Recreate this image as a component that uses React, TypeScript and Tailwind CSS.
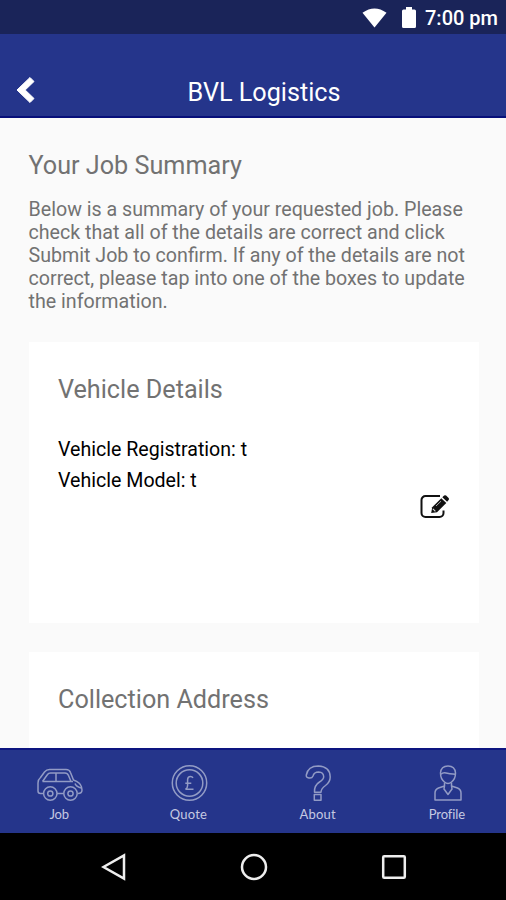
import type { ReactNode } from "react";

const TABS = [
    { label: "Job", icon: <CarIcon />, text: "tracking-[-0.3px]" },
    { label: "Quote", icon: <PoundIcon />, text: "tracking-[0.2px]" },
    { label: "About", icon: <QuestionIcon />, text: "tracking-[0.2px]" },
    { label: "Profile", icon: <PersonIcon />, text: "tracking-[-0.1px]" },
];

export default function App() {
    return (
        <div className="flex h-[900px] w-[506px] flex-col overflow-hidden bg-[#fafafa] font-['Roboto',sans-serif]">
            <StatusBar />
            <Header title="BVL Logistics" />

            <main className="flex min-h-0 flex-1 flex-col overflow-hidden px-[28.5px] text-[#727272]">
                <h1 className="mt-[32px] text-[25.2px] leading-[32px] whitespace-nowrap">Your Job Summary</h1>
                <p className="mt-[17px] text-[19.65px] leading-[22.9px] whitespace-nowrap">
                    Below is a summary of your requested job. Please
                    <br />
                    check that all of the details are correct and click
                    <br />
                    Submit Job to confirm. If any of the details are not
                    <br />
                    correct, please tap into one of the boxes to update
                    <br />
                    the information.
                </p>

                <Card title="Vehicle Details" className="mt-[28px] h-[281px]">
                    <div className="mt-[28px] text-[19.6px] leading-[31.5px] text-black">
                        <p>Vehicle Registration: t</p>
                        <p>Vehicle Model: t</p>
                    </div>
                    <button className="mt-[-3px] mr-[-1px] self-end" aria-label="Edit vehicle details">
                        <EditIcon />
                    </button>
                </Card>

                <Card title="Collection Address" className="mt-[29px] h-[281px]" />
            </main>

            <nav className="h-[85px] shrink-0 border-t-2 border-[#0d1580] bg-[#25358b]">
                <div className="mx-[-5.5px] grid grid-cols-4">
                    {TABS.map((tab) => (
                        <button key={tab.label} className="flex flex-col items-center pt-[15px] text-[#c5c9e2]">
                            {tab.icon}
                            <span
                                className={`mt-[4px] font-['Lato',sans-serif] text-[13px] leading-[18px] ${tab.text}`}
                            >
                                {tab.label}
                            </span>
                        </button>
                    ))}
                </div>
            </nav>

            <SystemNav />
        </div>
    );
}

function StatusBar() {
    return (
        <div className="flex h-[34px] shrink-0 items-center justify-end bg-[#1a2459] pt-px pr-[8px] text-white">
            <svg className="h-[20px] w-[25px]" viewBox="0 0 26 20" fill="currentColor">
                <path d="M.5 4.5Q13-4.5 25.500 4.500L13 20Z" />
            </svg>
            <svg className="ml-[15px] h-[21px] w-[14px]" viewBox="0 0 14 21" fill="currentColor">
                <path d="M4 0h6v2.500h2.500a1.500 1.500 0 0 1 1.500 1.500v15.500a1.500 1.500 0 0 1-1.500 1.500h-11A1.500 1.500 0 0 1 0 19.500V4a1.500 1.500 0 0 1 1.500-1.500H4Z" />
            </svg>
            <span className="ml-[9px] pt-px text-[20px] leading-[32px] font-medium whitespace-nowrap">7:00 pm</span>
        </div>
    );
}

function Header({ title }: Readonly<{ title: string }>) {
    return (
        <header className="grid h-[84px] shrink-0 grid-cols-[60px_1fr_38px] items-center border-b-2 border-[#07107a] bg-[#25358b] pt-[31px] text-white">
            <button className="ml-[16px] pb-[2px]" aria-label="Back">
                <svg className="h-[26px] w-[19px]" viewBox="0 0 19 26" fill="currentColor">
                    <path d="M14 .5 18 4.500 9.200 13 18 21.500 14 25.500 1 13Z" stroke="currentColor" strokeLinejoin="round" />
                </svg>
            </button>
            <h2 className="pt-[5px] text-center text-[25.2px] leading-[32px]">{title}</h2>
        </header>
    );
}

function Card({
    title,
    className,
    children,
}: Readonly<{ title: string; className: string; children?: ReactNode }>) {
    return (
        <section className={`flex w-[450px] shrink-0 flex-col bg-white px-[29.5px] pt-[32px] ${className}`}>
            <h2 className="text-[25.2px] leading-[32px] whitespace-nowrap">{title}</h2>
            {children}
        </section>
    );
}

function EditIcon() {
    return (
        <svg className="h-[25px] w-[30px]" viewBox="0 0 30 25" fill="none">
            <path
                d="M20 2H5.500A4 4 0 0 0 1.500 6v13a4 4 0 0 0 4 4h14a4 4 0 0 0 4-4v-2.500"
                stroke="#111"
                strokeWidth="2"
            />
            <path d="m12.200 13.300-1 5.700 5.800-.8L26.300 9l-5-4.700Z" fill="#111" />
            <path d="m22.300 3.300 1.800-1.700q1-.8 2 0l2.500 2.400q.9 1 0 2l-1.500 1.700Z" fill="#111" />
            <path d="m16 12 5-4.800" stroke="#aaa" strokeWidth="1" />
            <path d="m12.900 14.800 2.500 2.500" stroke="#ddd" strokeWidth="1.200" />
        </svg>
    );
}

function CarIcon() {
    return (
        <svg
            className="ml-[2px] h-[36px] w-[46px]"
            viewBox="0 0 46 36"
            fill="none"
            stroke="#929bc5"
            strokeWidth="1.500"
            strokeLinejoin="round"
        >
            <path d="M6 28.500H3.500Q1 28.500 1 26V18Q1 14.500 3.500 12.500L7.500 7Q9.500 4.500 12.500 4.500h16.500q3.500 0 4.500 3l3 7.500q7 2.500 8 7l.5 3q0 3.500-4 3.500" />
            <path d="M5.500 16.500h30.500M5.500 16.500l5-7Q11.500 8 13.500 8h14.500q2.500 0 3.500 2.500l2.500 6M19 8v8.500" />
            <circle cx="13.300" cy="28.500" r="6.700" />
            <circle cx="13.300" cy="28.500" r="2.600" />
            <circle cx="33.500" cy="28.500" r="6.700" />
            <circle cx="33.500" cy="28.500" r="2.600" />
            <path d="M20 28.500h6.800M38 18.500q1 3 6 4.500" />
        </svg>
    );
}

function PoundIcon() {
    return (
        <svg className="ml-[2px] h-[36px] w-[37px]" viewBox="0 0 37 36" fill="none" stroke="#929bc5" strokeWidth="1.500">
            <circle cx="18.500" cy="18" r="17.200" />
            <circle cx="18.500" cy="18" r="13.300" />
            <path d="M22 12.800q-.8-1.300-2.400-1.300-3 0-3 3.200v5.800q0 2.800-2.100 3.800h8M14.300 18.200h6" />
        </svg>
    );
}

function QuestionIcon() {
    return (
        <svg
            className="ml-px h-[36px] w-[26px]"
            viewBox="0 0 26 36"
            fill="none"
            stroke="#929bc5"
            strokeWidth="1.500"
            strokeLinejoin="round"
        >
            <path d="M1.300 10Q3 1 13.300 1 25 1.500 25.200 12q0 5-4.700 8.500-4.500 3-4.500 6.800H9.500Q9 20.500 14.500 17q4.200-2.500 4.200-5.200Q18.500 7.200 13.700 7 9 7 8 11 7 13.500 4 13 .8 12.500 1.300 10Z" />
            <rect x="9.300" y="29.500" width="6.700" height="5.700" />
        </svg>
    );
}

function PersonIcon() {
    return (
        <svg
            className="ml-[2px] h-[36px] w-[28px]"
            viewBox="0 0 28 36"
            fill="none"
            stroke="#929bc5"
            strokeWidth="1.500"
            strokeLinejoin="round"
        >
            <path d="M10.500 17Q6.500 14 6.500 8 7 1 14 1t7.500 7q0 6-4 9-3.500 3-7 0Z" />
            <path d="M7 9.300q2-2 5-1.300t9.500 1.300" />
            <path d="M10.500 17.500v3.500l-6 2Q1 24.500 1 28v7h26v-7q0-3.500-3.500-5l-6-2v-3.500M10.500 21l-.5 3 4 5.500 4-5.500-.5-3" />
        </svg>
    );
}

function SystemNav() {
    return (
        <div className="flex h-[67px] shrink-0 items-center bg-black pl-[101px] text-[#eee]">
            <svg className="h-[28px] w-[25px]" viewBox="0 0 25 28" fill="none" stroke="currentColor" strokeWidth="2.500">
                <path d="M23 2.500v23L2.500 14Z" />
            </svg>
            <svg className="ml-[114px] h-[28px] w-[28px]" viewBox="0 0 28 28" fill="none" stroke="currentColor" strokeWidth="2.500">
                <circle cx="14" cy="14" r="12" />
            </svg>
            <svg className="ml-[113px] h-[26px] w-[26px]" viewBox="0 0 26 26" fill="none" stroke="currentColor" strokeWidth="2.500">
                <rect x="2.200" y="2.200" width="21.600" height="21.600" rx="1" />
            </svg>
        </div>
    );
}
